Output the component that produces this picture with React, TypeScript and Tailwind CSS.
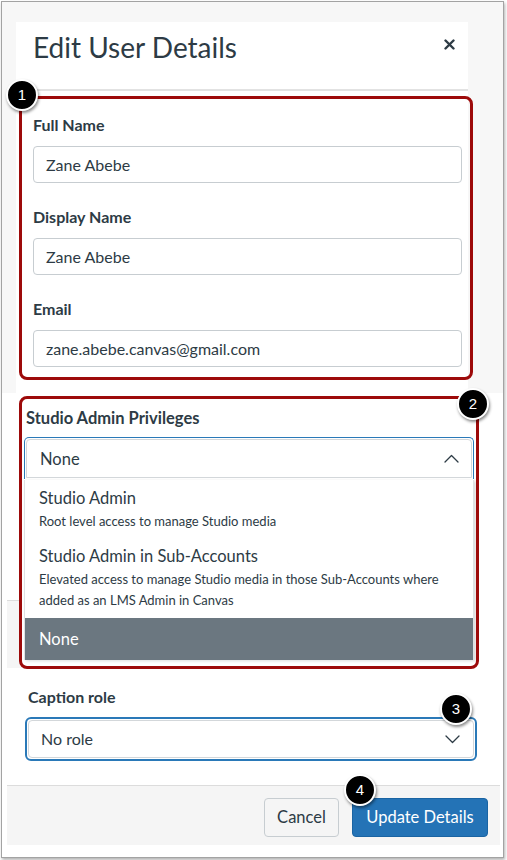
import React from "react"

const Badge = ({ n, x, y }: { n: number; x: number; y: number }) => (
  <div
    className="absolute w-[32px] h-[32px] rounded-full bg-black border-2 border-white shadow-[1px_2px_3px_rgba(0,0,0,0.45)] flex items-center justify-center text-white text-[15px] font-['Liberation_Sans',sans-serif]"
    style={{ left: x - 16, top: y - 16 }}
  >
    {n}
  </div>
)

const Field = ({ label, value, first }: { label: string; value: string; first?: boolean }) => (
  <div className={first ? "" : "mt-[24px]"}>
    <div className="text-[16px] font-bold leading-[20px]">{label}</div>
    <div className="mt-[11px] h-[37px] border border-[#c7cdd1] rounded-[4px] pl-[12px] flex items-center text-[16px] leading-[20px]">
      {value}
    </div>
  </div>
)

const Chevron = ({ up }: { up?: boolean }) => (
  <svg width="15" height="9" viewBox="0 0 15 9" fill="none">
    <polyline
      points={up ? "1,8 7.5,1.5 14,8" : "1,1 7.5,7.5 14,1"}
      stroke="#2d3b45"
      strokeWidth="1.3"
      strokeLinejoin="round"
      strokeLinecap="round"
    />
  </svg>
)

export default function App() {
  return (
    <div className="relative w-[507px] h-[860px] bg-white overflow-hidden pl-px pt-px font-['Lato',sans-serif] text-[#2d3b45]">
      <div className="w-[503px] h-[857px] border border-[#a3a3a3] shadow-[1px_2px_3px_rgba(0,0,0,0.3)] flex flex-col">
        {/* top: modal header + user fields */}
        <div className="h-[391px] bg-[#f7f7f7] pt-[20px] pl-[14px]">
          <div className="w-[452px] h-[371px] bg-white">
            <div className="h-[67px] pl-[17px] pr-[13px] pt-[8px] flex justify-between items-start">
              <h1 className="text-[28px] leading-[34px]">Edit User Details</h1>
              <svg width="11" height="11" viewBox="0 0 11 11" className="mt-[9px]">
                <path d="M1.5 1.5L9.5 9.5M9.5 1.5L1.5 9.5" stroke="#2d3b45" strokeWidth="2.4" strokeLinecap="round" />
              </svg>
            </div>
            <div className="h-[2px] bg-[#e2e2e2]" />
            <div className="pl-[17px] pr-[6px] pt-[24px]">
              <Field label="Full Name" value="Zane Abebe" first />
              <Field label="Display Name" value="Zane Abebe" />
              <Field label="Email" value="zane.abebe.canvas@gmail.com" />
            </div>
          </div>
        </div>

        {/* bottom: studio privileges dropdown, caption role, footer */}
        <div className="relative flex-1 bg-white">
          <div className="absolute left-[5px] top-[207px] w-[15px] h-[68px] bg-[#f5f5f5] border-t border-[#dcdcdc]" />

          <div className="relative ml-[22px] w-[450px] pt-[15px]">
            <div className="ml-[2px] text-[16.5px] font-bold leading-[20px]">Studio Admin Privileges</div>
            <div className="mt-[9px] h-[42px] rounded-t-[5px] border-[1.5px] border-b-0 border-[#2a79b8] p-px">
              <div className="h-full rounded-t-[4px] border border-[#d3d7da] pl-[13px] pr-[12px] flex items-center justify-between">
                <span className="text-[16.5px] leading-[20px]">None</span>
                <Chevron up />
              </div>
            </div>
            <div className="mt-px border-x border-[#dfe1e3] bg-white shadow-[2px_1px_3px_rgba(0,0,0,0.15)]">
              <div className="pl-[14px] pt-[8px] pb-[7px]">
                <div className="text-[16.5px] leading-[20px]">Studio Admin</div>
                <div className="mt-[3px] text-[13px] leading-[21px]">Root level access to manage Studio media</div>
              </div>
              <div className="pl-[14px] pr-[6px] pt-[7px] pb-[7px]">
                <div className="text-[16.5px] leading-[20px]">Studio Admin in Sub-Accounts</div>
                <div className="mt-[3px] text-[13px] leading-[21px]">
                  Elevated access to manage Studio media in those Sub-Accounts where added as an LMS Admin in Canvas
                </div>
              </div>
              <div className="h-[42px] bg-[#6b7780] pl-[14px] flex items-center text-white text-[16.5px] leading-[20px]">
                None
              </div>
            </div>
          </div>

          <div className="ml-[23px] w-[452px] mt-[27px]">
            <div className="ml-[3px] text-[16px] font-bold leading-[20px]">Caption role</div>
            <div className="mt-[10px] h-[44px] rounded-[6px] border-2 border-[#2a79b8] p-px">
              <div className="h-full rounded-[4px] border border-[#d3d7da] pl-[12px] pr-[13px] flex items-center justify-between">
                <span className="text-[16px] leading-[20px]">No role</span>
                <Chevron />
              </div>
            </div>
          </div>

          <div className="mt-[24px] ml-[5px] w-[493px] h-[60px] border-t border-[#dcdcdc] bg-[#f5f5f5] pt-[12px] pr-[12px] flex justify-end gap-[13px]">
            <button className="w-[75px] h-[39px] rounded-[4px] border border-[#c7cdd1] bg-[#f5f5f5] text-[16.5px] text-[#2d3b45]">
              Cancel
            </button>
            <button className="w-[136px] h-[39px] rounded-[4px] border border-[#1a64a3] bg-[#2473b6] text-[16.5px] text-white">
              Update Details
            </button>
          </div>
        </div>
      </div>

      {/* annotation overlays */}
      <div className="absolute left-[19px] top-[96px] w-[454px] h-[284px] border-[3.5px] border-[#9d0a0a] rounded-[8px]" />
      <div className="absolute left-[19px] top-[396px] w-[460px] h-[273px] border-[3.5px] border-[#9d0a0a] rounded-[8px]" />
      <Badge n={1} x={22} y={95} />
      <Badge n={2} x={473} y={404} />
      <Badge n={3} x={456} y={709} />
      <Badge n={4} x={360} y={790} />
    </div>
  )
}
